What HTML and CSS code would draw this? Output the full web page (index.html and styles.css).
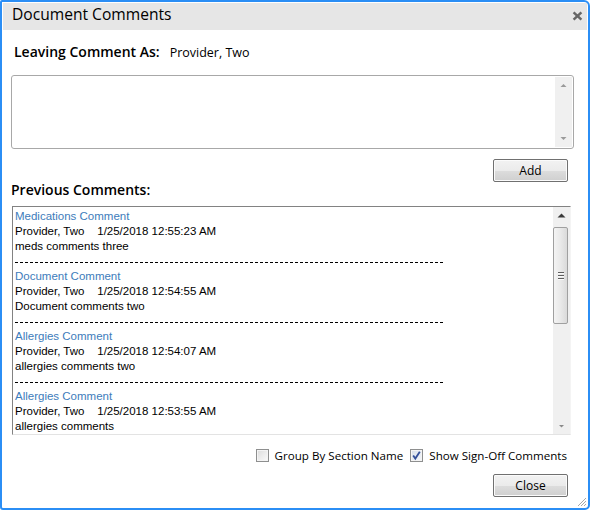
FILE: index.html
```html
<!DOCTYPE html>
<html>
<head>
<meta charset="utf-8">
<title>Document Comments</title>
<link rel="stylesheet" href="styles.css">
</head>
<body>
<div class="window">
  <div class="titlebar">
    <span class="title">Document Comments</span>
    <svg class="close-x" width="11" height="10" viewBox="0 0 11 10"><path d="M1.6 1.4 L9.4 8.6 M9.4 1.4 L1.6 8.6" stroke="#666" stroke-width="2.5"/></svg>
  </div>
  <div class="content">
    <div class="leaving"><span class="label">Leaving Comment As:</span><span class="who">Provider, Two</span></div>
    <div class="entry">
      <div class="entry-text"></div>
      <div class="sb sb-plain">
        <svg class="arrow" width="17" height="17" viewBox="0 0 17 17"><path d="M5.5 10 L8.5 7 L11.5 10 Z" fill="#9a9a9a"/></svg>
        <svg class="arrow" width="17" height="17" viewBox="0 0 17 17"><path d="M5.5 7 L8.5 10 L11.5 7 Z" fill="#9a9a9a"/></svg>
      </div>
    </div>
    <div class="btn-row add-row"><button class="btn">Add</button></div>
    <div class="label prev">Previous Comments:</div>
    <div class="list">
      <div class="items">
        <div class="item-title">Medications Comment</div>
        <div class="line">Provider, Two&nbsp;&nbsp;&nbsp;&nbsp;1/25/2018 12:55:23 AM</div>
        <div class="line">meds comments three</div>
        <div class="sep"></div>
        <div class="item-title">Document Comment</div>
        <div class="line">Provider, Two&nbsp;&nbsp;&nbsp;&nbsp;1/25/2018 12:54:55 AM</div>
        <div class="line">Document comments two</div>
        <div class="sep"></div>
        <div class="item-title">Allergies Comment</div>
        <div class="line">Provider, Two&nbsp;&nbsp;&nbsp;&nbsp;1/25/2018 12:54:07 AM</div>
        <div class="line">allergies comments two</div>
        <div class="sep"></div>
        <div class="item-title">Allergies Comment</div>
        <div class="line">Provider, Two&nbsp;&nbsp;&nbsp;&nbsp;1/25/2018 12:53:55 AM</div>
        <div class="line">allergies comments</div>
        <div class="sep"></div>
      </div>
      <div class="sb">
        <svg class="arrow" width="17" height="17" viewBox="0 0 17 17"><path d="M4.5 10.5 L8.5 6.5 L12.5 10.5 Z" fill="#3a3a3a"/></svg>
        <div class="thumb"><span class="grip-line"></span><span class="grip-line"></span><span class="grip-line"></span></div>
        <div class="track"></div>
        <svg class="arrow" width="17" height="17" viewBox="0 0 17 17"><path d="M6 8 L8.5 10.5 L11 8 Z" fill="#8a8a8a"/></svg>
      </div>
    </div>
    <div class="options">
      <label class="opt"><span class="cb"></span><span>Group By Section Name</span></label>
      <label class="opt"><span class="cb checked"><svg width="11" height="11" viewBox="0 0 11 11"><path d="M2.2 5.6 L4.3 8.6 L8.8 1.8" fill="none" stroke="#34509a" stroke-width="1.8"/></svg></span><span>Show Sign-Off Comments</span></label>
    </div>
    <div class="btn-row close-row"><button class="btn">Close</button></div>
  </div>
  <svg class="resize-grip" width="11" height="11" viewBox="0 0 11 11">
    <path d="M10 2 L2 10 M10 5 L5 10 M10 8 L8 10" stroke="#a8a8a8" stroke-width="1"/>
  </svg>
</div>
</body>
</html>
```
FILE: styles.css
```css
html, body {
  margin: 0;
  padding: 0;
  background: #fff;
}
body {
  font-family: "Open Sans", "Noto Sans", sans-serif;
  color: #000;
}
.window {
  box-sizing: border-box;
  width: 590px;
  height: 510px;
  border: 2px solid #2b8ef5;
  border-radius: 2px 6px 5px 3px;
  padding: 1px;
  position: relative;
  background: #fff;
  display: flex;
  flex-direction: column;
  overflow: hidden;
}
.titlebar {
  flex: none;
  height: 27px;
  background: #e6e6e6;
  display: flex;
  align-items: flex-start;
  padding: 0 4px 0 9px;
}
.title {
  font-size: 15.6px;
  line-height: 20px;
  margin-top: 1px;
}
.close-x {
  margin-left: auto;
  margin-top: 8px;
}
.content {
  display: flex;
  flex-direction: column;
  padding-left: 8px;
}
.label {
  font-size: 14px;
  font-weight: 600;
  line-height: 16px;
}
.leaving {
  margin-top: 13px;
  padding-left: 3px;
  height: 16px;
  line-height: 16px;
  white-space: nowrap;
}
.who {
  font-size: 12.5px;
  margin-left: 10px;
}
.entry {
  margin-top: 16px;
  width: 563px;
  height: 74px;
  box-sizing: border-box;
  border: 1px solid #a8a8a8;
  border-radius: 3px;
  padding: 1px;
  display: flex;
}
.entry-text {
  flex: 1;
}
.sb {
  width: 17px;
  background: #f0f0f0;
  display: flex;
  flex-direction: column;
}
.sb-plain {
  justify-content: space-between;
}
.arrow {
  display: block;
  flex: none;
}
.btn-row {
  display: flex;
  justify-content: flex-end;
  padding-right: 19px;
}
.add-row {
  margin-top: 10px;
}
.close-row {
  margin-top: 12px;
}
.btn {
  width: 75px;
  height: 23px;
  box-sizing: border-box;
  border: 1px solid #707070;
  border-radius: 2px;
  background: linear-gradient(#f2f2f2 0%, #ebebeb 50%, #dddddd 51%, #cfcfcf 100%);
  box-shadow: inset 0 0 0 1px #fbfbfb;
  font-family: "Open Sans", "Noto Sans", sans-serif;
  font-size: 12px;
  color: #000;
  padding: 0;
}
.prev {
  margin-top: 0;
  height: 16px;
}
.list {
  margin-top: 8px;
  margin-left: 1px;
  width: 559px;
  height: 229px;
  box-sizing: border-box;
  border-top: 1px solid #828282;
  border-left: 1px solid #828282;
  border-right: 1px solid #f4f4f4;
  border-bottom: 1px solid #e3e3e3;
  display: flex;
}
.items {
  flex: 1;
  overflow: hidden;
  padding: 2px 0 0 2px;
  font-family: "Liberation Sans", Arial, sans-serif;
  font-size: 11.5px;
  line-height: 15px;
  white-space: nowrap;
}
.item-title {
  color: #3d7cbb;
}
.sep {
  height: 15px;
  width: 430px;
  background: repeating-linear-gradient(to right, #000 0 3px, transparent 3px 5px);
  background-size: 430px 1px;
  background-repeat: no-repeat;
  background-position: 0 8px;
}
.thumb {
  flex: none;
  margin-top: 3px;
  height: 97px;
  width: 15px;
  box-sizing: border-box;
  border: 1px solid #a0a0a0;
  border-radius: 2px;
  background: linear-gradient(to right, #f4f4f4 0%, #e9e9e9 50%, #dadada 100%);
  display: flex;
  flex-direction: column;
  align-items: center;
  justify-content: center;
  gap: 2px;
}
.grip-line {
  width: 6px;
  height: 1px;
  background: #5e5e5e;
  box-shadow: 0 1px 0 #fafafa;
}
.track {
  flex: 1;
}
.options {
  margin-top: 14px;
  display: flex;
  justify-content: flex-end;
  align-items: center;
  padding-right: 20px;
  font-size: 11.6px;
  height: 13px;
  gap: 7px;
}
.opt {
  display: flex;
  align-items: center;
  gap: 6px;
  line-height: 13px;
}
.cb {
  width: 13px;
  height: 13px;
  box-sizing: border-box;
  border: 1px solid #8e8f8f;
  background: linear-gradient(135deg, #dcdcdc, #fbfbfb);
  box-shadow: inset 0 0 0 1px #f4f4f4;
  display: flex;
  align-items: center;
  justify-content: center;
}
.cb.checked {
  background: linear-gradient(135deg, #d6deea, #f6f8fb);
}
.resize-grip {
  position: absolute;
  right: 1px;
  bottom: 1px;
}
```
